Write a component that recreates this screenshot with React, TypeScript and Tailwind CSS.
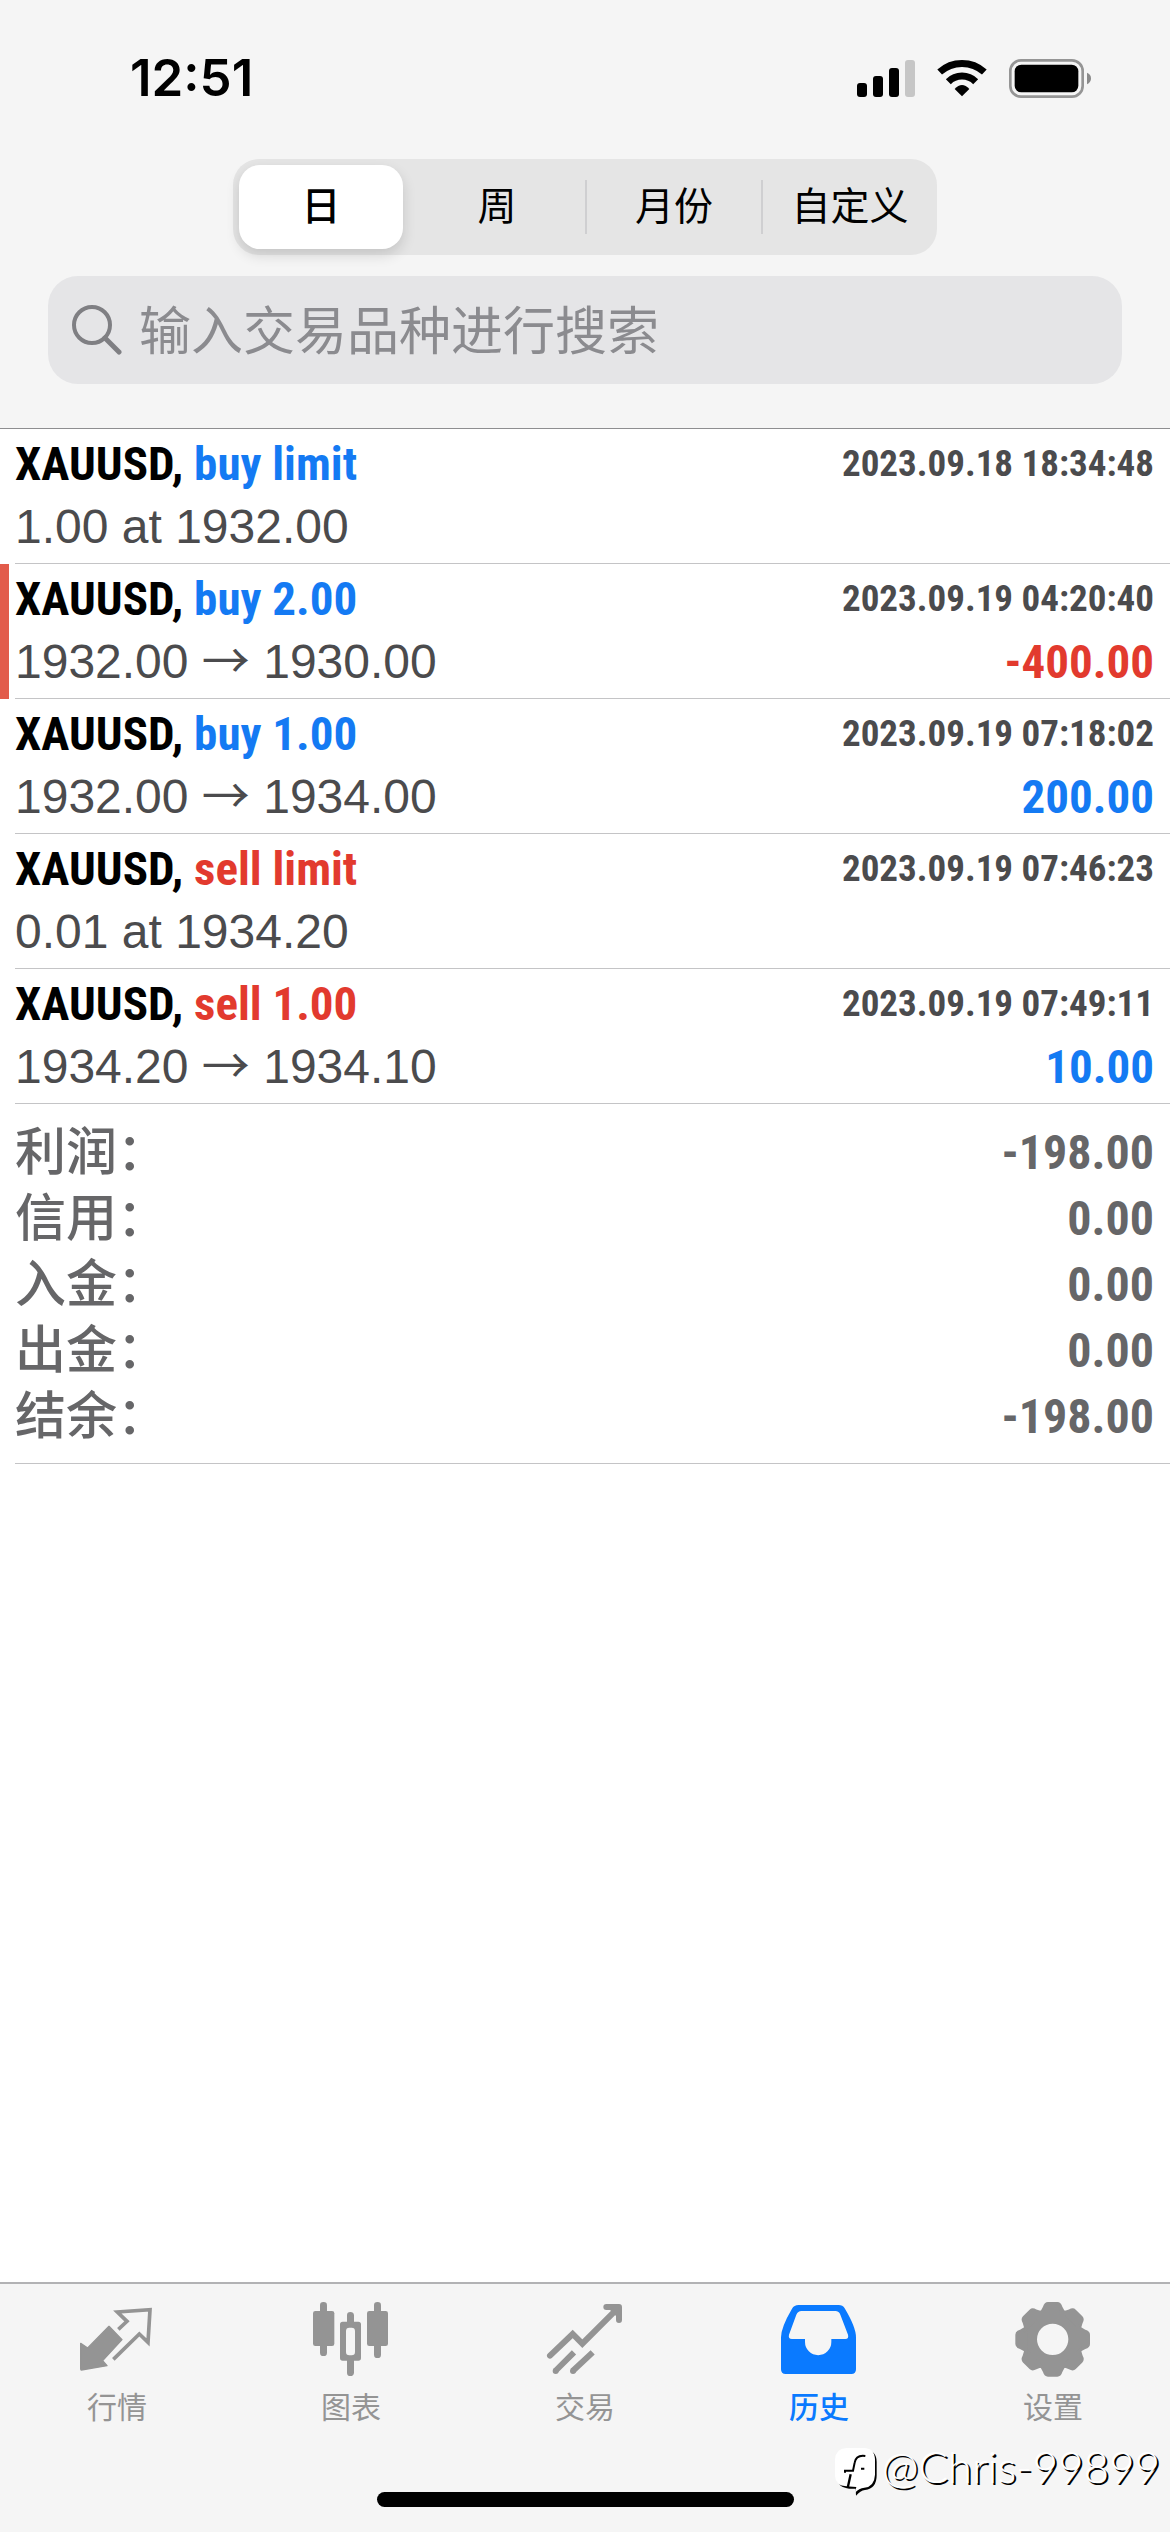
import type { ReactNode } from "react";

type Deal = {
  id: number;
  symbol: string;
  action: string;
  side: "buy" | "sell";
  time: string;
  from: string;
  to?: string;
  profit?: string;
  marked?: boolean;
};

type Tab = {
  label: string;
  icon: ReactNode;
  active?: boolean;
};

const periods = ["日", "周", "月份", "自定义"];

const deals: Deal[] = [
  { id: 1, symbol: "XAUUSD", action: "buy limit", side: "buy", time: "2023.09.18 18:34:48", from: "1.00 at 1932.00" },
  { id: 2, symbol: "XAUUSD", action: "buy 2.00", side: "buy", time: "2023.09.19 04:20:40", from: "1932.00", to: "1930.00", profit: "-400.00", marked: true },
  { id: 3, symbol: "XAUUSD", action: "buy 1.00", side: "buy", time: "2023.09.19 07:18:02", from: "1932.00", to: "1934.00", profit: "200.00" },
  { id: 4, symbol: "XAUUSD", action: "sell limit", side: "sell", time: "2023.09.19 07:46:23", from: "0.01 at 1934.20" },
  { id: 5, symbol: "XAUUSD", action: "sell 1.00", side: "sell", time: "2023.09.19 07:49:11", from: "1934.20", to: "1934.10", profit: "10.00" },
];

const summary = [
  { label: "利润", value: "-198.00" },
  { label: "信用", value: "0.00" },
  { label: "入金", value: "0.00" },
  { label: "出金", value: "0.00" },
  { label: "结余", value: "-198.00" },
];

// 标题、时间和金额共用的窄体字体
const condensed = "font-['Roboto_Condensed','Open_Sans_Condensed','Noto_Sans_Condensed',Roboto,sans-serif] font-bold";

function StatusBar() {
  return (
    <div className="flex h-[159px] items-start justify-between pt-[48px] pr-[78px] pl-[130px]">
      <span className="font-['Inter',sans-serif] text-[51px] leading-[60px] font-semibold text-black">
        12:51
      </span>
      <div className="flex h-[60px] items-center gap-[22px]">
        <svg className="h-[37px] w-[58px]" viewBox="0 0 174 111" aria-hidden="true">
          <rect x="0" y="69" width="30" height="42" rx="9" />
          <rect x="48" y="48" width="30" height="63" rx="9" />
          <rect x="96" y="24" width="30" height="87" rx="9" />
          <rect x="144" y="0" width="30" height="111" rx="9" fill="#c6c6c6" />
        </svg>
        <svg className="h-[38px] w-[50px]" viewBox="0 0 150 114" aria-hidden="true">
          <g fill="none" stroke="#000" strokeWidth="21">
            <path d="M8 39A100 100 0 0 1 142 39" />
            <path d="M34 68A58 58 0 0 1 116 68" />
          </g>
          <path d="M75 112L53 90Q75 66 97 90Z" />
        </svg>
        <svg className="h-[39px] w-[83px]" viewBox="0 0 249 117" aria-hidden="true">
          <rect x="4" y="4" width="217" height="109" rx="32" fill="none" stroke="#959595" strokeWidth="8" />
          <rect x="17" y="17" width="191" height="83" rx="20" />
          <path d="M234 41Q246 46 246 58T234 76Z" fill="#8a8a8a" />
        </svg>
      </div>
    </div>
  );
}

function PeriodSwitch() {
  return (
    <div className="mx-auto grid h-[96px] w-full max-w-[704px] grid-cols-4 rounded-[26px] bg-[#e5e5e5]">
      {periods.map((period, index) => (
        <div key={period} className="flex items-center">
          {/* 选中项旁边没有分隔线 */}
          {index > 1 ? <span className="h-[54px] w-[2px] bg-[#cfcfd1]" /> : null}
          <button
            type="button"
            aria-pressed={index === 0}
            className={`mx-[6px] h-[84px] flex-1 rounded-[21px] text-[39px] text-black ${
              index === 0 ? "bg-white font-medium shadow-[0_6px_14px_rgba(0,0,0,0.14)]" : ""
            }`}
          >
            {period}
          </button>
        </div>
      ))}
    </div>
  );
}

function SearchField() {
  return (
    <label className="mx-[48px] mt-[21px] flex h-[108px] items-center rounded-[30px] bg-[#e5e5e7] px-[24px]">
      <svg className="h-[50px] w-[50px] shrink-0" viewBox="0 0 50 50" fill="none" stroke="#7f7f83" aria-hidden="true">
        <circle cx="20" cy="20" r="18" strokeWidth="4" />
        <path d="M33 33L47 47" strokeWidth="5" strokeLinecap="round" />
      </svg>
      <input
        type="search"
        aria-label="搜索交易品种"
        placeholder="输入交易品种进行搜索"
        className="ml-[17px] min-w-0 flex-1 bg-transparent pt-[4px] text-[52px] leading-[72px] outline-none placeholder:text-[#8b8b8f]"
      />
    </label>
  );
}

function DealRow({ deal }: { deal: Deal }) {
  const sideColor = deal.side === "buy" ? "text-[#147af3]" : "text-[#e23a2e]";
  const profitColor = deal.profit?.startsWith("-") ? "text-[#e23a2e]" : "text-[#147af3]";

  return (
    <li className={`border-l-[9px] pl-[6px] ${deal.marked ? "border-[#e25b4b]" : "border-transparent"}`}>
      <div className="h-[135px] border-b border-[#c4c4c6] pr-[16px]">
        <div className={`flex items-center justify-between pt-[3px] ${condensed}`}>
          <span className="text-[47px] leading-[64px] text-black">
            {deal.symbol}, <span className={sideColor}>{deal.action}</span>
          </span>
          <time className="text-[37px] leading-[64px] text-[#4b4b4d]">{deal.time}</time>
        </div>
        <div className="flex items-center justify-between">
          <span className="font-['Liberation_Sans',sans-serif] text-[48px] leading-[62px] text-[#4b4b4d]">
            {deal.from}
            {deal.to ? (
              <>
                {" "}
                <span className="font-['Noto_Sans_CJK_SC',sans-serif] leading-none">→</span> {deal.to}
              </>
            ) : null}
          </span>
          {deal.profit ? (
            <span className={`text-[47px] leading-[62px] ${condensed} ${profitColor}`}>{deal.profit}</span>
          ) : null}
        </div>
      </div>
    </li>
  );
}

function Summary() {
  return (
    <dl className="ml-[15px] border-b border-[#c4c4c6] pt-[16px] pr-[16px] pb-[13px] text-[#666668]">
      {summary.map((item) => (
        <div key={item.label} className="flex h-[66px] items-center justify-between">
          <dt className="text-[51px] leading-[66px] font-medium">{item.label}：</dt>
          <dd className={`text-[48px] leading-[66px] ${condensed}`}>{item.value}</dd>
        </div>
      ))}
    </dl>
  );
}

function TabIcon({ children }: { children: ReactNode }) {
  return (
    <svg className="h-[78px] w-[78px]" viewBox="0 0 234 234" fill="currentColor" aria-hidden="true">
      {children}
    </svg>
  );
}

const gearTooth = "M-46-76Q-34-84-29-98Q-25-112-14-112H14Q25-112 29-98Q34-84 46-76Z";

const tabs: Tab[] = [
  {
    label: "行情",
    icon: (
      <TabIcon>
        <path d="M93 79L132 119L74 182L87 197L10 210Q8 210 8 206V130L29 144Z" stroke="currentColor" strokeWidth="4" strokeLinejoin="round" />
        <path d="M121 88L147 64L118 36L216 29L210 127L184 102L106 178" fill="none" stroke="currentColor" strokeWidth="11" />
      </TabIcon>
    ),
  },
  {
    label: "图表",
    icon: (
      <TabIcon>
        <rect x="3" y="33" width="64" height="105" rx="7" />
        <rect x="24" y="6" width="21" height="162" rx="10" />
        <path
          fillRule="evenodd"
          d="M92 65H139Q147 65 147 73V174Q147 182 139 182H92Q84 182 84 174V73Q84 65 92 65ZM112 83Q102 83 102 93V156Q102 166 112 166H119Q129 166 129 156V93Q129 83 119 83Z"
        />
        <path d="M105 68V46Q105 36 115 36T126 46V68ZM105 180V218Q105 228 115 228T126 218V180Z" />
        <rect x="165" y="33" width="63" height="105" rx="7" />
        <rect x="186" y="6" width="21" height="168" rx="10" />
      </TabIcon>
    ),
  },
  {
    label: "交易",
    icon: (
      <TabIcon>
        <g fill="none" stroke="currentColor" strokeWidth="18">
          <path d="M12 167L80 102L109 131L212 28" strokeLinecap="round" />
          <path d="M181 21H219V60" strokeLinecap="round" strokeLinejoin="round" />
          <path d="M28 213L84 157M80 213L140 157" />
        </g>
        <path d="M190 28H222V60Z" />
        <circle cx="29" cy="213" r="9" />
        <circle cx="81" cy="213" r="9" />
      </TabIcon>
    ),
  },
  {
    label: "历史",
    active: true,
    icon: (
      <TabIcon>
        <path
          fillRule="evenodd"
          d="M56 15H176Q188 15 194 25Q228 82 228 112V208Q228 222 214 222H17Q3 222 3 208V112Q3 82 36 26Q42 15 56 15ZM64 33Q54 33 49 44L27 104Q24 117 36 117H75V126A39 39 0 0 0 154 126V117H196Q207 117 204 104L181 44Q177 33 166 33Z"
        />
      </TabIcon>
    ),
  },
  {
    label: "设置",
    icon: (
      <TabIcon>
        <circle cx="116" cy="118" r="66" fill="none" stroke="currentColor" strokeWidth="38" />
        <g transform="translate(116 118)">
          {[0, 45, 90, 135, 180, 225, 270, 315].map((angle) => (
            <path key={angle} d={gearTooth} transform={`rotate(${angle})`} />
          ))}
        </g>
      </TabIcon>
    ),
  },
];

function TabBar() {
  return (
    <nav className="grid grid-cols-5 border-t-2 border-[#b2b2b4] pt-[16px]">
      {tabs.map((tab) => (
        <a
          key={tab.label}
          href="#"
          aria-current={tab.active ? "page" : undefined}
          className={`flex flex-col items-center ${tab.active ? "font-medium text-[#0a7aff]" : "text-[#949494]"}`}
        >
          {tab.icon}
          <span className="mt-[8px] text-[30px] leading-[44px]">{tab.label}</span>
        </a>
      ))}
    </nav>
  );
}

function Watermark() {
  return (
    <div className="absolute right-[10px] bottom-[36px] flex items-end gap-[5px]">
      <svg className="h-[48px] w-[42px]" viewBox="0 0 126 144" aria-hidden="true">
        <path d="M40 6H92Q125 8 125 42V82Q125 122 90 126Q76 128 63 143L62 122H44Q8 120 5 88V42Q8 8 40 6Z" fill="#000" />
        <path d="M34 0H86Q118 0 120 34V80Q118 116 88 119Q72 121 60 134L64 117L34 115Q2 114 0 84V34Q2 2 34 0Z" fill="#fff" />
        <path d="M91 24Q63 20 59 44L54 68H30V74M78 62H88" fill="none" stroke="#000" strokeWidth="6" />
        <path d="M47 79L38 120" fill="none" stroke="#000" strokeWidth="7" />
      </svg>
      <span className="font-['Lato',sans-serif] text-[44px] leading-[60px] font-light text-white [text-shadow:2px_2px_0_#000]">
        @Chris-99899
      </span>
    </div>
  );
}

export default function App() {
  return (
    <div
      lang="zh-CN"
      className="relative flex min-h-screen flex-col bg-white font-['Liberation_Sans','Noto_Sans_CJK_SC',sans-serif]"
    >
      <header className="border-b border-[#8e8e90] bg-[#f5f5f5] pb-[44px]">
        <StatusBar />
        <PeriodSwitch />
        <SearchField />
      </header>

      <main className="flex-1">
        <ul>
          {deals.map((deal) => (
            <DealRow key={deal.id} deal={deal} />
          ))}
        </ul>
        <Summary />
      </main>

      <footer className="bg-[#f5f5f5] pb-[25px]">
        <TabBar />
        {/* 底部横条 */}
        <div className="mx-auto mt-[62px] h-[15px] w-[417px] rounded-full bg-black" />
      </footer>

      <Watermark />
    </div>
  );
}
